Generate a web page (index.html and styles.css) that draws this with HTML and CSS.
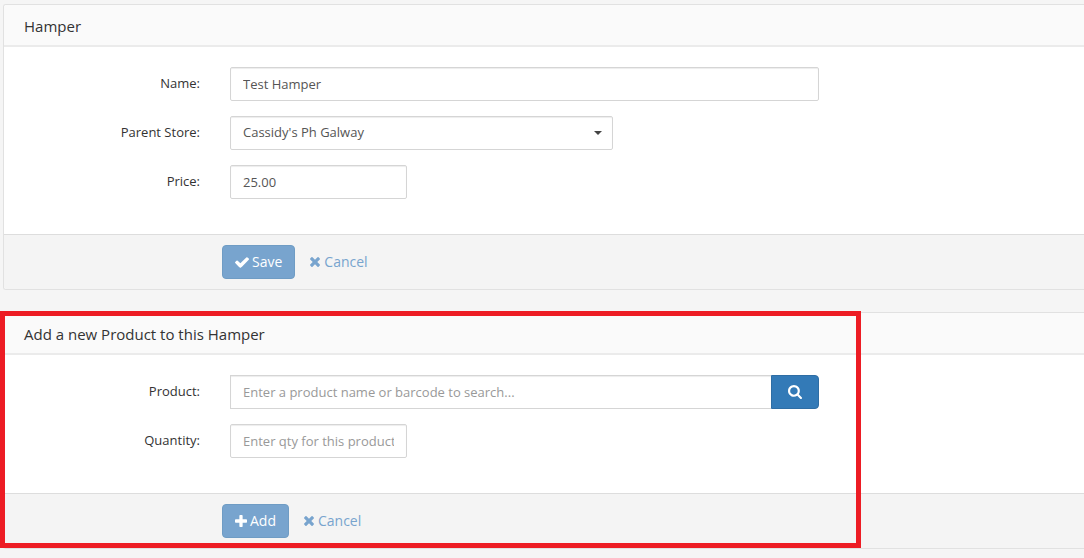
FILE: index.html
```html
<!DOCTYPE html>
<html lang="en">
<head>
<meta charset="utf-8">
<title>Hamper</title>
<link rel="stylesheet" href="styles.css">
</head>
<body>
<main class="page">
  <form class="panel">
    <h2 class="panel-title">Hamper</h2>
    <div class="panel-body">
      <div class="row">
        <label class="label" for="name">Name:</label>
        <input class="control control-large" id="name" type="text" value="Test Hamper">
      </div>
      <div class="row">
        <label class="label" for="store">Parent Store:</label>
        <div class="select control-medium">
          <select class="control" id="store"><option>Cassidy's Ph Galway</option></select>
          <svg class="caret" viewBox="0 0 8 4" aria-hidden="true"><path d="M0 0h8L4 4z"/></svg>
        </div>
      </div>
      <div class="row">
        <label class="label" for="price">Price:</label>
        <input class="control control-small" id="price" type="text" value="25.00">
      </div>
    </div>
    <div class="panel-footer">
      <button class="button" type="button">
        <svg class="icon icon-wide" viewBox="121 0 1550 1188" aria-hidden="true"><path d="M1671 232q0 40-28 68l-724 724-136 136q-28 28-68 28t-68-28l-136-136-362-362q-28-28-28-68t28-68l136-136q28-28 68-28t68 28l294 295 656-657q28-28 68-28t68 28l136 136q28 28 28 68z"/></svg>
        Save
      </button>
      <a class="link" href="#">
        <svg class="icon icon-cross" viewBox="0 0 1188 1188" aria-hidden="true"><path d="M1188 956q0 40-28 68l-136 136q-28 28-68 28t-68-28L594 866l-294 294q-28 28-68 28t-68-28L28 1024q-28-28-28-68t28-68l294-294L28 300Q0 272 0 232t28-68L164 28q28-28 68-28t68 28l294 294L888 28q28-28 68-28t68 28l136 136q28 28 28 68t-28 68L866 594l294 294q28 28 28 68z"/></svg>
        Cancel
      </a>
    </div>
  </form>

  <div class="highlighted">
    <form class="panel">
      <h2 class="panel-title">Add a new Product to this Hamper</h2>
      <div class="panel-body">
        <div class="row">
          <label class="label" for="product">Product:</label>
          <div class="search control-large">
            <input class="control" id="product" type="text" placeholder="Enter a product name or barcode to search...">
            <button class="search-button" type="button" aria-label="Search">
              <svg class="icon icon-search" viewBox="0 0 1664 1664" aria-hidden="true"><path d="M1152 704q0-185-131.500-316.500T704 256 387.500 387.500 256 704t131.500 316.500T704 1152t316.500-131.500T1152 704zm512 832q0 52-38 90t-90 38q-54 0-90-38l-343-342q-179 124-399 124-143 0-273.500-55.500t-225-150-150-225T0 704t55.500-273.500 150-225 225-150T704 0t273.500 55.500 225 150 150 225T1408 704q0 220-124 399l343 343q37 37 37 90z"/></svg>
            </button>
          </div>
        </div>
        <div class="row">
          <label class="label" for="quantity">Quantity:</label>
          <input class="control control-small" id="quantity" type="text" placeholder="Enter qty for this product">
        </div>
      </div>
      <div class="panel-footer">
        <button class="button" type="button">
          <svg class="icon" viewBox="0 0 1408 1408" aria-hidden="true"><path d="M1408 608v192q0 40-28 68t-68 28H896v416q0 40-28 68t-68 28H608q-40 0-68-28t-28-68V896H96q-40 0-68-28T0 800V608q0-40 28-68t68-28h416V96q0-40 28-68t68-28h192q40 0 68 28t28 68v416h416q40 0 68 28t28 68z"/></svg>
          Add
        </button>
        <a class="link" href="#">
          <svg class="icon icon-cross" viewBox="0 0 1188 1188" aria-hidden="true"><path d="M1188 956q0 40-28 68l-136 136q-28 28-68 28t-68-28L594 866l-294 294q-28 28-68 28t-68-28L28 1024q-28-28-28-68t28-68l294-294L28 300Q0 272 0 232t28-68L164 28q28-28 68-28t68 28l294 294L888 28q28-28 68-28t68 28l136 136q28 28 28 68t-28 68L866 594l294 294q28 28 28 68z"/></svg>
          Cancel
        </a>
      </div>
    </form>
    <div class="highlight"></div>
  </div>
</main>
</body>
</html>
```
FILE: styles.css
```css
* {
  box-sizing: border-box;
}

body {
  margin: 0;
  background: #f5f5f5;
  color: #333;
  font: 13px/20px "Open Sans", sans-serif;
}

.page {
  display: flex;
  flex-direction: column;
  gap: 22px;
  padding: 4px 0 9px 3px;
}

.panel {
  border: 1px solid #e1e1e1;
  border-right: 0;
  border-radius: 3px 0 0 3px;
  background: #fff;
  overflow: hidden;
}

.panel-title {
  margin: 0;
  padding: 11px 20px 9px;
  border-bottom: 2px solid #ebebeb;
  background: #fafafa;
  font-size: 15px;
  font-weight: 400;
  line-height: 20px;
}

.panel-body {
  display: flex;
  flex-direction: column;
  gap: 15px;
  padding: 20px 20px 35px 0;
}

.row {
  display: grid;
  grid-template-columns: 196px minmax(0, 1fr);
  column-gap: 30px;
}

.label {
  padding-top: 6px;
  text-align: right;
}

.control {
  width: 100%;
  height: 34px;
  margin: 0;
  padding: 6px 12px;
  border: 1px solid #d5d5d5;
  border-radius: 2px;
  background: #fff;
  box-shadow: inset 0 1px 1px rgba(0, 0, 0, 0.075);
  color: #555;
  font: inherit;
  appearance: none;
}

.control::placeholder {
  color: #999;
  opacity: 1;
}

.control-large {
  max-width: 589px;
}

.control-medium {
  max-width: 383px;
}

.control-small {
  max-width: 177px;
}

.select {
  display: grid;
  align-items: center;
}

.select > * {
  grid-area: 1 / 1;
}

.select .control {
  padding-top: 5px;
  padding-bottom: 7px;
}

.caret {
  justify-self: end;
  width: 8px;
  height: 4px;
  margin-right: 11px;
  fill: #444;
  pointer-events: none;
}

.search {
  display: flex;
}

.search .control {
  flex: 1;
  min-width: 0;
  border-right: 0;
  border-radius: 0;
}

.search-button {
  display: flex;
  align-items: center;
  justify-content: center;
  width: 48px;
  padding: 0;
  border: 1px solid #2e6da4;
  border-radius: 0 4px 4px 0;
  background: #337ab7;
  color: #fff;
}

.panel-footer {
  display: flex;
  align-items: center;
  gap: 15px;
  padding: 10px 20px 10px 218px;
  border-top: 1px solid #ddd;
  background: #f4f4f4;
}

.button,
.link {
  display: flex;
  align-items: center;
  gap: 4px;
  font: 500 14px/20px "Open Sans", sans-serif;
}

.button {
  gap: 3px;
  height: 34px;
  padding: 0 12px;
  border: 1px solid #6f9cc4;
  border-radius: 4px;
  background: #78a4ce;
  color: #fff;
}

.link {
  color: #78a4ce;
  text-decoration: none;
}

.icon {
  width: 12px;
  height: 12px;
  fill: currentColor;
}

.icon-wide {
  width: 14px;
  height: 11px;
}

.icon-cross {
  width: 10px;
  height: 10px;
}

.icon-search {
  width: 14px;
  height: 14px;
}

.highlighted {
  position: relative;
}

/* Annotation frame drawn over the second panel */
.highlight {
  position: absolute;
  top: -1px;
  bottom: 1px;
  left: -3px;
  width: 861px;
  border: 5px solid #ed1c24;
  pointer-events: none;
}
```
